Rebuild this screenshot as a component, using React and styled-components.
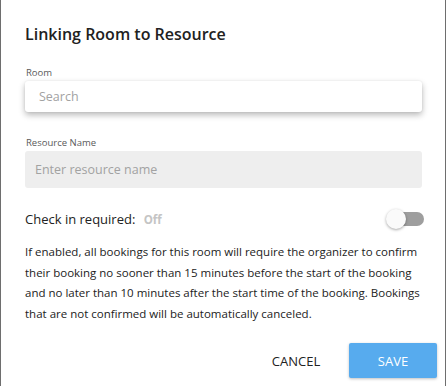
import React, { useState } from 'react';
import styled, { createGlobalStyle } from 'styled-components';

const GlobalStyle = createGlobalStyle`
	html, body {
		margin: 0;
		padding: 0;
		background: #6e6e6e;
		font-family: "Open Sans", "Liberation Sans", sans-serif;
	}
	* { box-sizing: border-box; }
`

const Backdrop = styled.div`
	width: 446px;
	height: 386px;
	padding: 0 1px;
	overflow: hidden;
`

const Modal = styled.div`
	background: #fff;
	height: 386px;
	padding: 22px 23px 0 24px;
	display: flex;
	flex-direction: column;
`

const Title = styled.h2`
	margin: 0;
	font-size: 16px;
	line-height: 24px;
	font-weight: 600;
	color: #212121;
`

const Field = styled.div`
	display: flex;
	flex-direction: column;
	margin-top: ${p => p.$top}px;
`

const Label = styled.label`
	font-size: 9.5px;
	line-height: 14px;
	color: #5a5a5a;
	margin-bottom: ${p => p.$gap}px;
	padding-left: 1px;
`

const Input = styled.input`
	height: ${p => p.$filled ? 37 : 31}px;
	border: none;
	outline: none;
	border-radius: 3px;
	font-family: inherit;
	font-size: 12.5px;
	color: #333;
	padding: 0 ${p => p.$filled ? 10 : 14}px;
	background: ${p => p.$filled ? '#eeeeee' : '#fff'};
	box-shadow: ${p => p.$filled ? 'none' : '0 3px 6px rgba(0,0,0,0.28), 0 0 2px rgba(0,0,0,0.08)'};
	&::placeholder { color: #a2a2a2; }
`

const CheckRow = styled.div`
	margin-top: 19px;
	height: 24px;
	display: flex;
	align-items: center;
	justify-content: space-between;
`

const CheckLabel = styled.span`
	font-size: 13px;
	color: #222;
	span {
		margin-left: 5px;
		font-size: 11.5px;
		font-weight: 700;
		color: #c4c4c4;
	}
`

const Switch = styled.button`
	position: relative;
	width: 38px;
	height: 24px;
	border: none;
	padding: 0;
	background: transparent;
	cursor: pointer;
	margin-right: -2px;
	&::before {
		content: '';
		position: absolute;
		left: 2px;
		right: 0;
		top: 5px;
		height: 14px;
		border-radius: 7px;
		background: ${p => p.$on ? '#9cc9f2' : '#9e9e9e'};
	}
	&::after {
		content: '';
		position: absolute;
		top: 2px;
		left: ${p => p.$on ? 18 : 0}px;
		width: 20px;
		height: 20px;
		border-radius: 50%;
		background: ${p => p.$on ? '#55a8ee' : '#fafafa'};
		box-shadow: 0 1px 3px rgba(0,0,0,0.35);
	}
`

const Help = styled.p`
	margin: 11px 0 0;
	font-size: 11.5px;
	line-height: 20.7px;
	color: #222;
`

const Actions = styled.div`
	margin-top: auto;
	margin-bottom: 8px;
	display: flex;
	justify-content: flex-end;
	align-items: center;
	gap: 15px;
	margin-right: -15px;
`

const Button = styled.button`
	height: 35px;
	min-width: ${p => p.$primary ? 88 : 76}px;
	border: none;
	border-radius: 2px;
	font-family: inherit;
	font-size: 13px;
	text-transform: uppercase;
	cursor: pointer;
	color: ${p => p.$primary ? '#fff' : '#222'};
	background: ${p => p.$primary ? '#57abee' : 'transparent'};
	box-shadow: ${p => p.$primary ? '0 1px 3px rgba(0,0,0,0.25)' : 'none'};
`

const App = () => {
	const [checkIn, setCheckIn] = useState(false);

	return (
		<Backdrop>
			<GlobalStyle />
			<Modal>
				<Title>Linking Room to Resource</Title>

				<Field $top={20}>
					<Label $gap={1}>Room</Label>
					<Input placeholder="Search" />
				</Field>

				<Field $top={24}>
					<Label $gap={1}>Resource Name</Label>
					<Input $filled placeholder="Enter resource name" />
				</Field>

				<CheckRow>
					<CheckLabel>Check in required: <span>{checkIn ? 'On' : 'Off'}</span></CheckLabel>
					<Switch $on={checkIn} onClick={() => setCheckIn(!checkIn)} />
				</CheckRow>

				<Help>
					If enabled, all bookings for this room will require the organizer to confirm
					their booking no sooner than 15 minutes before the start of the booking
					and no later than 10 minutes after the start time of the booking. Bookings
					that are not confirmed will be automatically canceled.
				</Help>

				<Actions>
					<Button>Cancel</Button>
					<Button $primary>Save</Button>
				</Actions>
			</Modal>
		</Backdrop>
	);
}

export default App;
